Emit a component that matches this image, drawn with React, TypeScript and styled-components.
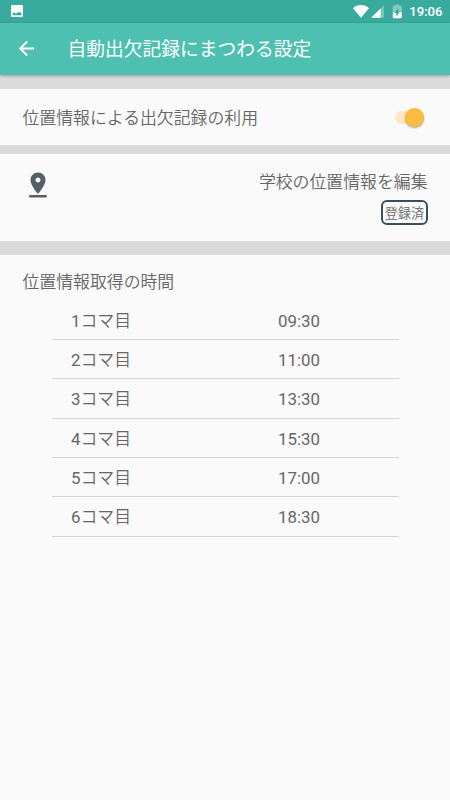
import React from "react";
import styled, { createGlobalStyle } from "styled-components";

const GlobalStyle = createGlobalStyle`
  * { box-sizing: border-box; }
  body {
    margin: 0;
    background: #fafafa;
    font-family: Roboto, "Noto Sans CJK JP", sans-serif;
    font-size: 16.875px;
    color: #666;
  }
  svg { display: block; }
`;

const Screen = styled.div`
  width: 450px;
  height: 800px;
  background: #fafafa;
  overflow: hidden;
  white-space: nowrap;
`;

const StatusBar = styled.div`
  height: 22.5px;
  background: #39ab9e;
  color: #fff;
  display: flex;
  align-items: center;
  justify-content: space-between;
  padding: 0 7.5px 0 9px;
`;

const StatusIcons = styled.div`
  display: flex;
  align-items: center;
`;

const Clock = styled.span`
  font-size: 13.125px;
  font-weight: 500;
  line-height: 22px;
  margin: 1.5px 0 0 4px;
`;

const Icon = styled.svg<{ $size: number; $left?: number; $top?: number }>`
  flex: none;
  width: ${(p) => p.$size}px;
  height: ${(p) => p.$size}px;
  margin-left: ${(p) => p.$left ?? 0}px;
  margin-top: ${(p) => p.$top ?? 0}px;
  fill: currentColor;
`;

const AppBar = styled.header`
  position: relative;
  height: 52.5px;
  background: #4dc0b2;
  color: #fff;
  display: flex;
  align-items: center;
  padding-left: 15px;
  box-shadow: 0 1px 3px rgba(0, 0, 0, 0.3);
`;

const Title = styled.h1`
  margin: 2px 0 0 29.5px;
  font-size: 18.75px;
  font-weight: 400;
  line-height: 28px;
`;

const Content = styled.main`
  display: flex;
  flex-direction: column;
`;

const Section = styled.section<{ $band: number }>`
  border-top: ${(p) => p.$band}px solid #dbdbdb;
  padding: 0 22.5px;
`;

const ToggleSection = styled(Section)`
  height: 70px;
  display: flex;
  align-items: center;
  justify-content: space-between;
`;

const PlaceSection = styled(Section)`
  height: 95.5px;
  display: flex;
  justify-content: space-between;
  padding-top: 15px;
`;

const PlaceInfo = styled.div`
  display: flex;
  flex-direction: column;
  align-items: flex-end;
`;

const Label = styled.span`
  display: block;
  font-weight: 350;
  line-height: 25px;
  padding-top: 1px;
`;

const ToggleLabel = styled(Label)`
  padding-top: 2.5px;
`;

const Badge = styled.span`
  height: 25.5px;
  margin-top: 4.5px;
  padding: 0 1.5px;
  border: 2px solid #37505a;
  border-radius: 6px;
  font-size: 13.125px;
  font-weight: 350;
  line-height: 24px;
`;

const Track = styled.span`
  width: 29px;
  height: 13px;
  margin-right: 3.5px;
  border-radius: 7px;
  background: #fde8c3;
  display: flex;
  align-items: center;
  justify-content: flex-end;
`;

const Thumb = styled.span`
  flex: none;
  width: 19px;
  height: 19px;
  border-radius: 50%;
  background: #fbbc42;
  box-shadow: 0 1px 2px rgba(0, 0, 0, 0.35);
`;

const TimesSection = styled(Section)`
  padding-top: 14px;
`;

const TimeTable = styled.div`
  width: 347px;
  margin: 6px 0 0 29.5px;
`;

const TimeRow = styled.div`
  height: 39.4px;
  display: grid;
  grid-template-columns: 207px 1fr;
  padding-left: 19px;
  line-height: 40px;
  border-bottom: 1px solid #d6d6d6;
`;

const Unit = styled.span`
  font-weight: 350;
`;

const PERIODS = ["09:30", "11:00", "13:30", "15:30", "17:00", "18:30"];

export default function App() {
  return (
    <Screen>
      <GlobalStyle />
      <StatusBar>
        <Icon $size={16} viewBox="0 0 24 24">
          <path
            fillRule="evenodd"
            d="M21 19V5c0-1.1-.9-2-2-2H5c-1.1 0-2 .9-2 2v14c0 1.1.9 2 2 2h14c1.1 0 2-.9 2-2zM5.500 18.500v-3l2.500-1.500 2.500 2.500 3-3.500 1.500 2 2-2 1.500 2.500v3z"
          />
        </Icon>
        <StatusIcons>
          <Icon $size={16} viewBox="0 0 24 24">
            <path d="M12 22 24 8C20.500 4.500 16.500 3 12 3S3.500 4.500 0 8z" />
          </Icon>
          <Icon $size={15} $left={1} viewBox="0 0 24 24">
            <path d="M2 22h20V2z" fillOpacity=".35" />
            <path d="M2 22h15V7z" />
          </Icon>
          <Icon $size={16.5} $left={3.5} viewBox="0 0 24 24">
            <g transform="translate(-3.6 0) scale(1.3 1)">
              <path
                fillOpacity=".38"
                d="M17 5.330C17 4.600 16.400 4 15.670 4H14V2h-4v2H8.330C7.600 4 7 4.600 7 5.330v8.170h2.530L13 7v5.500h2l-.53 1H17V5.330z"
              />
              <path d="M14.470 13.500L11 20v-5.500H9l.53-1H7v7.170C7 21.400 7.600 22 8.330 22h7.330c.74 0 1.340-.6 1.340-1.330V13.500h-2.530z" />
            </g>
          </Icon>
          <Clock>19:06</Clock>
        </StatusIcons>
      </StatusBar>
      <AppBar>
        <Icon $size={23} viewBox="0 0 24 24">
          <path d="M20 11H7.830l5.590-5.590L12 4l-8 8 8 8 1.410-1.410L7.830 13H20z" />
        </Icon>
        <Title>自動出欠記録にまつわる設定</Title>
      </AppBar>
      <Content>
        <ToggleSection $band={14}>
          <ToggleLabel>位置情報による出欠記録の利用</ToggleLabel>
          <Track>
            <Thumb />
          </Track>
        </ToggleSection>
        <PlaceSection $band={9}>
          <Icon $size={30} $top={0.5} viewBox="0 0 24 24" color="#546065">
            <path d="M18 8c0-3.310-2.690-6-6-6S6 4.690 6 8c0 4.500 6 11 6 11s6-6.500 6-11zm-8 0c0-1.100.9-2 2-2s2 .9 2 2-.89 2-2 2c-1.100 0-2-.9-2-2zM5 20v2h14v-2H5z" />
          </Icon>
          <PlaceInfo>
            <Label>学校の位置情報を編集</Label>
            <Badge>登録済</Badge>
          </PlaceInfo>
        </PlaceSection>
        <TimesSection $band={14}>
          <Label>位置情報取得の時間</Label>
          <TimeTable>
            {PERIODS.map((time, index) => (
              <TimeRow key={time}>
                <span>
                  {index + 1}
                  <Unit>コマ目</Unit>
                </span>
                <span>{time}</span>
              </TimeRow>
            ))}
          </TimeTable>
        </TimesSection>
      </Content>
    </Screen>
  );
}
